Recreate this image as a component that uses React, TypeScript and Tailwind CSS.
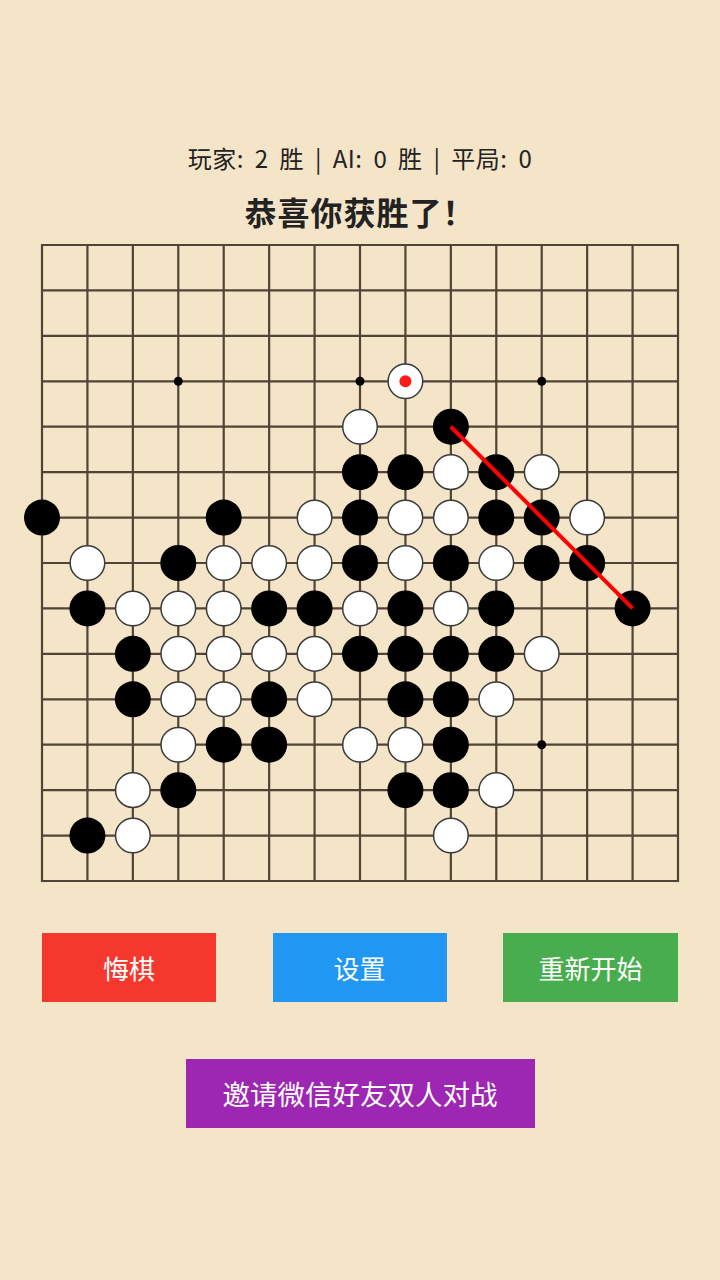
import React from 'react';

const BOARD = [
  '...............',
  '...............',
  '...............',
  '........W......',
  '.......W.B.....',
  '.......BBWBW...',
  'B...B.WBWWBBW..',
  '.W.BWWWBWBWBB..',
  '.BWWWBBWBWB..B.',
  '..BWWWWBBBBW...',
  '..BWWBW.BBW....',
  '...WBB.WWB.....',
  '..WB....BBW....',
  '.BW......W.....',
  '...............',
];

const SIZE = 15;
const X0 = 42;
const Y0 = 19;
const CELL = 636 / 14;
const STARS: [number, number][] = [
  [3, 3], [7, 3], [11, 3], [7, 7], [3, 11], [7, 11], [11, 11],
];
const LAST: [number, number] = [8, 3];
const WIN: [[number, number], [number, number]] = [[9, 4], [13, 8]];

const px = (c: number) => X0 + c * CELL;
const py = (r: number) => Y0 + r * CELL;

function Board() {
  const lines = [];
  for (let i = 0; i < SIZE; i++) {
    lines.push(<line key={'h' + i} x1={px(0) - 1} y1={py(i)} x2={px(14) + 1} y2={py(i)} stroke="#4f4436" strokeWidth={2.2} />);
    lines.push(<line key={'v' + i} x1={px(i)} y1={py(0) - 1} x2={px(i)} y2={py(14) + 1} stroke="#4f4436" strokeWidth={2.2} />);
  }
  const stones = [];
  BOARD.forEach((row, r) => {
    row.split('').forEach((ch, c) => {
      if (ch === 'B') {
        stones.push(<circle key={`s${r}-${c}`} cx={px(c)} cy={py(r)} r={18} fill="#000" />);
      } else if (ch === 'W') {
        stones.push(<circle key={`s${r}-${c}`} cx={px(c)} cy={py(r)} r={17.3} fill="#fff" stroke="#3a3a3a" strokeWidth={1.5} />);
      }
    });
  });
  return (
    <svg width={720} height={676} viewBox="0 0 720 676" className="block">
      {lines}
      {STARS.map(([c, r]) => (
        <circle key={`st${c}-${r}`} cx={px(c)} cy={py(r)} r={4.5} fill="#000" />
      ))}
      {stones}
      <circle cx={px(LAST[0])} cy={py(LAST[1])} r={6} fill="#ff1a1a" />
      <line
        x1={px(WIN[0][0])}
        y1={py(WIN[0][1])}
        x2={px(WIN[1][0])}
        y2={py(WIN[1][1])}
        stroke="#ff0000"
        strokeWidth={4}
      />
    </svg>
  );
}

export default function App() {
  return (
    <div
      className="min-h-[1280px] w-[720px] bg-[#f5e5c8] flex flex-col items-center text-[#222]"
      style={{ fontFamily: '"Noto Sans CJK SC", "Noto Sans", sans-serif' }}
    >
      <div className="pt-[140px] h-[176px] text-[24px] leading-[36px] tracking-[0.5px] [word-spacing:5px]">
        玩家: 2 胜 | AI: 0 胜 | 平局: 0
      </div>
      <div className="mt-[20px] text-[32px] leading-[30px] font-bold tracking-[1px]">恭喜你获胜了！</div>
      <Board />
      <div className="mt-[31px] w-full px-[42px] flex justify-between">
        <button className="w-[174px] h-[69px] bg-[#f4382e] text-white text-[26px]">悔棋</button>
        <button className="w-[174px] h-[69px] bg-[#1f97f3] text-white text-[26px]">设置</button>
        <button className="w-[175px] h-[69px] bg-[#48ad4e] text-white text-[26px]">重新开始</button>
      </div>
      <button className="mt-[57px] w-[349px] h-[69px] bg-[#9d26b3] text-white text-[27.5px]">邀请微信好友双人对战</button>
    </div>
  );
}
